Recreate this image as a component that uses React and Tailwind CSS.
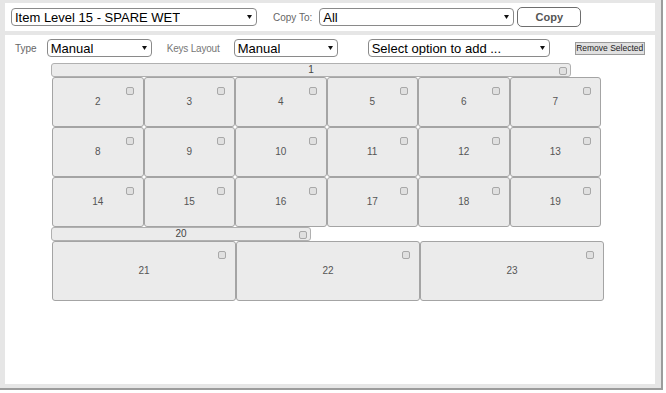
import { Fragment } from "react";

const font = { fontFamily: '"Liberation Sans", Arial, sans-serif' };

function Caret() {
  return (
    <svg width="5" height="4" viewBox="0 0 5 4" className="shrink-0">
      <path d="M0 0 H5 L2.5 4 Z" fill="#111" />
    </svg>
  );
}

function FakeSelect({ value, className }) {
  return (
    <div
      className={`flex h-[18px] items-center justify-between rounded-[4px] border border-[#8a8a8a] bg-white pl-[3px] pr-[4px] text-[13px] leading-none text-black ${className}`}
    >
      <span className="truncate">{value}</span>
      <Caret />
    </div>
  );
}

function Check({ className }) {
  return (
    <span
      className={`absolute h-[8px] w-[8px] rounded-[2px] border border-[#a8a8a8] bg-[#e0e0e0] ${className}`}
    />
  );
}

function Bar({ label, className }) {
  return (
    <div
      className={`relative flex h-[14px] items-center justify-center rounded-[3px] border border-[#b0b0b0] bg-[#ebebeb] text-[10px] leading-none text-[#444] ${className}`}
    >
      {label}
      <Check className="right-[3px] top-[3px]" />
    </div>
  );
}

function Key({ label, tall }) {
  return (
    <div
      className={`relative flex items-center justify-center rounded-[3px] border border-[#a4a4a4] bg-[#ebebeb] text-[10px] leading-none text-[#555] ${
        tall ? "h-[60px]" : "h-[50px]"
      }`}
    >
      {label}
      <Check className="right-[9px] top-[9px]" />
    </div>
  );
}

const rows = [
  [2, 3, 4, 5, 6, 7],
  [8, 9, 10, 11, 12, 13],
  [14, 15, 16, 17, 18, 19],
];

export default function App() {
  return (
    <div
      style={font}
      className="flex h-[390px] w-[663px] flex-col gap-[4px] border-b-2 border-r-2 border-[#9c9c9c] bg-[#e6e6e6] pb-[4px] pl-[5px] pr-[6px] pt-[3px]"
    >
      {/* top bar */}
      <div className="flex h-[28px] shrink-0 items-center bg-white pl-[6px]">
        <FakeSelect value="Item Level 15 - SPARE WET" className="w-[246px]" />
        <span className="ml-[16px] text-[10px] text-[#666]">Copy To:</span>
        <FakeSelect value="All" className="ml-[7px] w-[195px]" />
        <button className="ml-[3px] h-[20px] w-[64px] rounded-[5px] border border-[#6e6e6e] bg-white text-[11px] font-bold text-[#555]">
          Copy
        </button>
      </div>

      {/* main panel */}
      <div className="flex flex-1 flex-col bg-white pt-[4px]">
        <div className="flex items-center pl-[10px]">
          <span className="text-[10px] text-[#666]">Type</span>
          <FakeSelect value="Manual" className="ml-[10px] w-[105px]" />
          <span className="ml-[15px] w-[55px] text-[10px] tracking-[-0.2px] text-[#777]">Keys Layout</span>
          <FakeSelect value="Manual" className="ml-[12px] w-[104px]" />
          <FakeSelect value="Select option to add ..." className="ml-[30px] w-[182px]" />
          <button className="ml-[25px] flex h-[13px] w-[70px] items-center justify-center border border-[#9a9a9a] bg-[#e0e0e0] text-[8.5px] leading-none text-[#222]">
            Remove Selected
          </button>
        </div>

        <div className="ml-[46px] mt-[6px] flex flex-col">
          <Bar label="1" className="w-[520px]" />
          {rows.map((row, i) => (
            <div key={i} className="ml-[1px] grid w-[549px] grid-cols-6">
              {row.map((n) => (
                <Key key={n} label={n} />
              ))}
            </div>
          ))}
          <Bar label="20" className="w-[260px]" />
          <div className="ml-[1px] grid w-[552px] grid-cols-3">
            {[21, 22, 23].map((n) => (
              <Fragment key={n}>
                <Key label={n} tall />
              </Fragment>
            ))}
          </div>
        </div>
      </div>
    </div>
  );
}
